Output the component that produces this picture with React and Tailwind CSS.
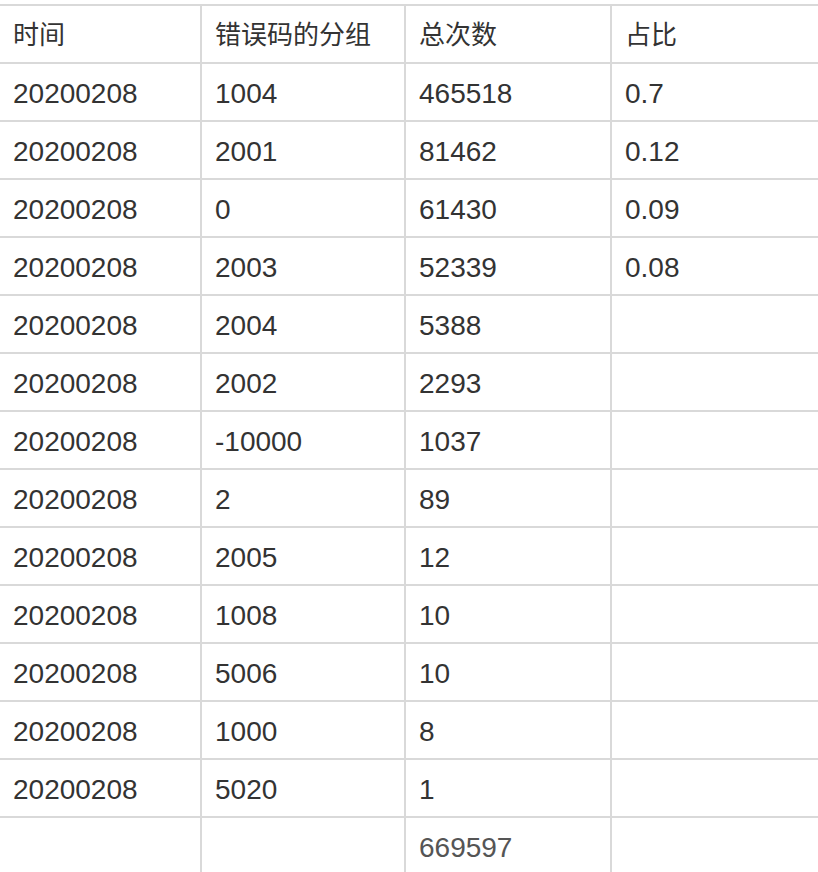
import React from "react";

const rows = [
  ["20200208", "1004", "465518", "0.7"],
  ["20200208", "2001", "81462", "0.12"],
  ["20200208", "0", "61430", "0.09"],
  ["20200208", "2003", "52339", "0.08"],
  ["20200208", "2004", "5388", ""],
  ["20200208", "2002", "2293", ""],
  ["20200208", "-10000", "1037", ""],
  ["20200208", "2", "89", ""],
  ["20200208", "2005", "12", ""],
  ["20200208", "1008", "10", ""],
  ["20200208", "5006", "10", ""],
  ["20200208", "1000", "8", ""],
  ["20200208", "5020", "1", ""],
];

function Row({ cells, muted, head }) {
  return (
    <div className="grid grid-cols-[202px_204px_206px_1fr] border-b-2 border-[#d9d9d9]">
      {cells.map((c, i) => (
        <div
          key={i}
          className={`h-[56px] flex items-center pl-[13px] pt-[3px] ${head ? "text-[26px]" : "text-[28px]"} ${i < 3 ? "border-r-2 border-[#d9d9d9]" : ""} ${muted ? "text-[#555555]" : "text-[#333333]"}`}
        >
          {c}
        </div>
      ))}
    </div>
  );
}

export default function App() {
  return (
    <div
      className="w-[818px] h-[872px] overflow-hidden bg-white pt-[4px]"
      style={{ fontFamily: '"Liberation Sans", "Noto Sans CJK SC", sans-serif' }}
    >
      <div className="border-t-2 border-[#d9d9d9]">
        <Row head cells={["时间", "错误码的分组", "总次数", "占比"]} />
        {rows.map((r, i) => (
          <Row key={i} cells={r} />
        ))}
        <Row cells={["", "", "669597", ""]} muted />
      </div>
    </div>
  );
}
